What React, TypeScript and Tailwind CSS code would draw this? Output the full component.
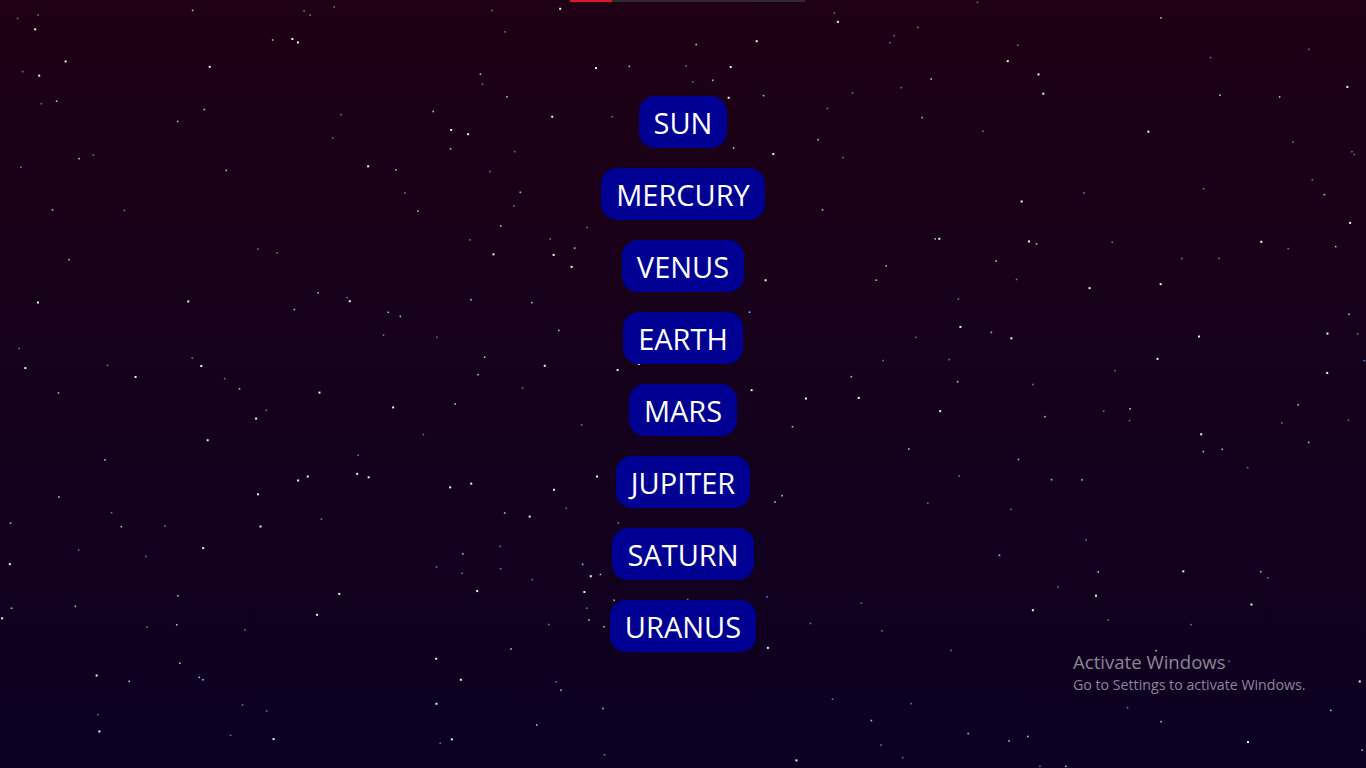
import { useMemo } from "react";

const planets = ["SUN", "MERCURY", "VENUS", "EARTH", "MARS", "JUPITER", "SATURN", "URANUS"];

// deterministic pseudo-random so the starfield stays put
const rand = (seed: number) => {
  let s = seed;
  return () => {
    s = (s * 16807) % 2147483647;
    return (s - 1) / 2147483646;
  };
};

const Stars = () => {
  const stars = useMemo(() => {
    const r = rand(42);
    return Array.from({ length: 330 }, () => {
      const b = r();
      return {
        x: r() * 1366,
        y: r() * 768,
        size: b > 0.7 ? 2 : 1.6,
        color: b > 0.7 ? "#e8f6ff" : b > 0.35 ? "#9dbcff" : "#5f70c8",
      };
    });
  }, []);

  return (
    <svg className="absolute inset-0 w-full h-full" viewBox="0 0 1366 768" preserveAspectRatio="none">
      {stars.map((s, i) => (
        <rect key={i} x={s.x} y={s.y} width={s.size} height={s.size} fill={s.color} />
      ))}
    </svg>
  );
};

export default function App() {
  return (
    <div
      className="relative w-full h-[768px] overflow-hidden bg-gradient-to-b from-[#1f0014] to-[#0d0022]"
      style={{ fontFamily: '"Open Sans", "Noto Sans", sans-serif' }}
    >
      <Stars />

      {/* loading bar */}
      <div className="absolute top-0 left-[570px] w-[235px] h-[2px] bg-[#2a2a30]">
        <div className="w-[42px] h-full bg-[#e0162b]" />
      </div>

      <div className="relative flex flex-col items-center gap-5 pt-[96px]">
        {planets.map((p) => (
          <button
            key={p}
            className="h-[52px] px-[15px] rounded-[16px] bg-[#000092] text-white text-[29px] leading-none"
          >
            {p}
          </button>
        ))}
      </div>

      <div className="absolute left-[1073px] top-[651px] text-[#8d8596]">
        <div className="text-[18.6px] leading-[22px]">Activate Windows</div>
        <div className="text-[14.2px] leading-[20px] mt-[2px]">Go to Settings to activate Windows.</div>
      </div>
    </div>
  );
}
